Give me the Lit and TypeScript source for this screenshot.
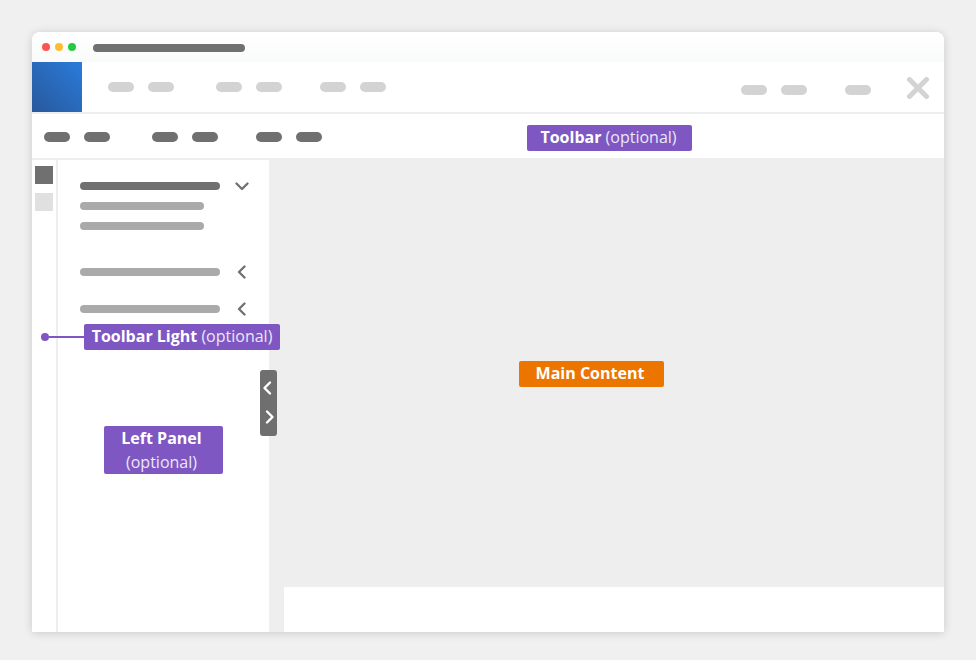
import { LitElement, html, css, svg } from "lit";
import { customElement } from "lit/decorators.js";

const chevron = (d: string, w: number, h: number, vb: string, cls: string) => html`
  <svg class=${cls} width=${w} height=${h} viewBox=${vb} fill="none" stroke="currentColor" stroke-width="2.3" stroke-linecap="round" stroke-linejoin="round">${svg`<path d=${d}></path>`}</svg>`;

@customElement("app-root")
export class AppRoot extends LitElement {
  static styles = css`
    :host { display: block; width: 976px; height: 660px; background: #f0f0f0; font-family: "Open Sans", sans-serif; overflow: hidden; }
    * { box-sizing: border-box; }
    .page { padding: 32px; height: 660px; }
    .window { position: relative; width: 912px; height: 600px; background: #fff; border-radius: 8px 8px 0 0; box-shadow: 0 1px 10px rgba(0,0,0,.16); display: flex; flex-direction: column; overflow: hidden; }
    .titlebar { height: 30px; flex: none; display: flex; align-items: center; padding: 0 0 0 10px; background: linear-gradient(#fff, #f9fafa); }
    .dots { display: flex; gap: 5px; }
    .dot { width: 8px; height: 8px; border-radius: 50%; }
    .url { width: 152px; height: 8px; border-radius: 4px; background: #707070; margin-left: 17px; margin-top: 1px; }
    .header { height: 52px; flex: none; display: flex; border-bottom: 2px solid #eee; }
    .logo { width: 50px; height: 50px; background: linear-gradient(45deg, #28589b, #2a7bdb); flex: none; }
    .pills { display: flex; gap: 14px; }
    .pill { width: 26px; height: 10px; border-radius: 5px; background: #d3d3d3; }
    .pill.dark { background: #707070; }
    .g42 { margin-left: 42px; }
    .g38 { margin-left: 38px; }
    .nav { display: flex; padding: 20px 0 0 26px; }
    .right { display: flex; margin-left: auto; padding: 15px 0 0; align-items: flex-start; }
    .right .pills { padding-top: 8px; }
    .x { margin: 0 15px 0 36px; display: block; }
    .toolbar { height: 44px; flex: none; display: flex; padding: 18px 0 0 12px; }
    .body { flex: 1; display: flex; border-top: 2px solid #eee; min-height: 0; }
    .rail { width: 26px; flex: none; border-right: 2px solid #eee; padding: 6px 0 0 3px; display: flex; flex-direction: column; gap: 9px; }
    .sq { width: 18px; height: 18px; background: #707070; }
    .sq.light { background: #e0e0e0; }
    .panel { width: 211px; flex: none; padding: 22px 0 0 22px; display: flex; flex-direction: column; }
    .row { display: flex; align-items: center; position: relative; height: 8px; }
    .bar { height: 8px; border-radius: 4px; background: #aaa; width: 140px; }
    .bar.dark { background: #707070; }
    .bar.short { width: 124px; }
    .row.a { margin-top: 12px; }
    .row.b { margin-top: 38px; }
    .row.c { margin-top: 29px; }
    .row svg { color: #707070; flex: none; }
    .down { margin-left: 15px; }
    .left { margin-left: 17px; }
    .main { flex: 1; background: #eee; display: flex; flex-direction: column; justify-content: flex-end; padding-left: 15px; }
    .footer { height: 45px; background: #fff; }
    .handle { position: absolute; left: 228px; top: 338px; width: 17px; height: 66px; background: #6f6f6f; border-radius: 3px; color: #fff; display: flex; flex-direction: column; align-items: flex-start; }
    .handle svg { display: block; }
    .chev-up { margin: 10px 0 0 2px; }
    .chev-down { margin: 13px 0 0 5px; }
    .tag { position: absolute; background: #7e57c2; color: #fff; border-radius: 2px; font-size: 16px; line-height: 24px; height: 26px; padding-bottom: 2px; display: flex; align-items: center; justify-content: center; white-space: pre; }
    .tag b { font-weight: 700; }
    .tag span { font-weight: 400; color: #ece6f6; }
    .tag.toolbarTag { left: 495px; top: 93px; width: 165px; padding-right: 2px; }
    .tag.lightTag { left: 52px; top: 292px; width: 196px; }
    .tag.panelTag { left: 72px; top: 394px; width: 119px; height: 48px; padding: 0 4px 0 0; flex-direction: column; }
    .tag.mainTag { left: 487px; top: 329px; width: 145px; padding-right: 3px; background: #ec7500; }
    .lead { position: absolute; left: 9px; top: 301px; width: 43px; height: 8px; display: flex; align-items: center; }
    .lead i { width: 8px; height: 8px; border-radius: 50%; background: #7e57c2; flex: none; }
    .lead u { flex: 1; height: 2px; background: #7e57c2; }
  `;

  render() {
    const pair = (cls = "", dark = false) => html`
      <div class="pills ${cls}">
        <div class="pill ${dark ? "dark" : ""}"></div>
        <div class="pill ${dark ? "dark" : ""}"></div>
      </div>`;
    return html`
      <div class="page">
        <div class="window">
          <div class="titlebar">
            <div class="dots">
              <div class="dot" style="background:#ff5252"></div>
              <div class="dot" style="background:#ffbd2e"></div>
              <div class="dot" style="background:#27c93f"></div>
            </div>
            <div class="url"></div>
          </div>
          <div class="header">
            <div class="logo"></div>
            <div class="nav">
              ${pair()}${pair("g42")}${pair("g38")}
            </div>
            <div class="right">
              ${pair()}
              <div class="pills g38"><div class="pill"></div></div>
              <svg class="x" width="22" height="22" viewBox="0 0 22 22" fill="none" stroke="#d3d3d3" stroke-width="5" stroke-linecap="round"><path d="M2.5 2.5 19.5 19.5M19.5 2.5 2.5 19.5"></path></svg>
            </div>
          </div>
          <div class="toolbar">
            ${pair("", true)}${pair("g42", true)}${pair("g38", true)}
          </div>
          <div class="body">
            <div class="rail">
              <div class="sq"></div>
              <div class="sq light"></div>
            </div>
            <div class="panel">
              <div class="row">
                <div class="bar dark"></div>
                ${chevron("M1.5 1.5 7 7l5.5-5.5", 14, 9, "0 0 14 9", "down")}
              </div>
              <div class="row a"><div class="bar short"></div></div>
              <div class="row a"><div class="bar short"></div></div>
              <div class="row b">
                <div class="bar"></div>
                ${chevron("M7.5 1.5 2 7l5.5 5.5", 9, 14, "0 0 9 14", "left")}
              </div>
              <div class="row c">
                <div class="bar"></div>
                ${chevron("M7.5 1.5 2 7l5.5 5.5", 9, 14, "0 0 9 14", "left")}
              </div>
            </div>
            <div class="main"><div class="footer"></div></div>
          </div>
          <div class="handle">
            <svg class="chev-up" width="10" height="16" viewBox="0 0 10 16" fill="none" stroke="currentColor" stroke-width="2.4" stroke-linecap="round" stroke-linejoin="round"><path d="M8 2.5 2.5 8 8 13.5"></path></svg>
            <svg class="chev-down" width="10" height="16" viewBox="0 0 10 16" fill="none" stroke="currentColor" stroke-width="2.4" stroke-linecap="round" stroke-linejoin="round"><path d="M2 2.5 7.5 8 2 13.5"></path></svg>
          </div>
          <div class="tag toolbarTag"><b>Toolbar</b><span> (optional)</span></div>
          <div class="lead"><i></i><u></u></div>
          <div class="tag lightTag"><b>Toolbar Light</b><span> (optional)</span></div>
          <div class="tag panelTag"><b>Left Panel</b><span>(optional)</span></div>
          <div class="tag mainTag"><b>Main Content</b></div>
        </div>
      </div>
    `;
  }
}
